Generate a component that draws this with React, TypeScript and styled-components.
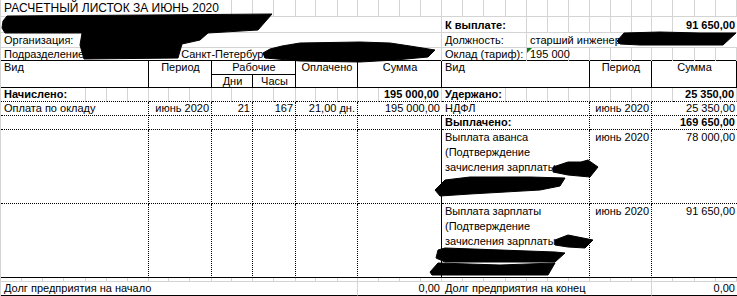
import React from "react";
import styled, { createGlobalStyle, css } from "styled-components";

const W = [21,21,21,22,21,21,21,20,21,22,20,21,21,22,20,22,20,21,21,21,21,21,21,22,21,21,21,21,21,21,20,21,22,21,21];
const COLS = W.map((w) => `${w}px`).join(" ");

const GRID = "#d4d4d4";

const Global = createGlobalStyle`
  html, body { margin: 0; padding: 0; background: #fff; }
  body { font-family: "Liberation Sans", Arial, sans-serif; font-size: 11px; color: #000; }
`;

type Line = "grid" | "dot" | "solid" | "none";
const line = (l?: Line) =>
  l === "solid" ? "1px solid #000" : l === "dot" ? "1px dotted #000" : l === "grid" ? `1px solid ${GRID}` : "0";

const Sheet = styled.div`
  position: relative;
  width: 737px;
  height: 296px;
  overflow: hidden;
  box-sizing: border-box;
  border-left: 1px solid ${GRID};
  background: #fff;
`;

const Row = styled.div<{ $h: number }>`
  display: grid;
  grid-template-columns: ${COLS};
  height: ${(p) => p.$h}px;
`;

const HeaderGrid = styled.div`
  display: grid;
  grid-template-columns: ${COLS};
  grid-template-rows: 14px 12px;
  border-top: 1px solid #000;
  border-bottom: 1px solid #000;
`;

const Cell = styled.div<{
  $span?: number;
  $r?: Line;
  $b?: Line;
  $align?: "left" | "right" | "center";
  $top?: boolean;
  $bold?: boolean;
  $rows?: number;
  $lh?: number;
}>`
  grid-column: span ${(p) => p.$span ?? 1};
  ${(p) => p.$rows && css`grid-row: span ${p.$rows};`}
  box-sizing: border-box;
  position: relative;
  border-right: ${(p) => line(p.$r ?? "grid")};
  border-bottom: ${(p) => line(p.$b ?? "none")};
  padding: 0 2px 0 3px;
  display: flex;
  align-items: ${(p) => (p.$top ? "flex-start" : "flex-end")};
  justify-content: ${(p) => (p.$align === "right" ? "flex-end" : p.$align === "center" ? "center" : "flex-start")};
  text-align: ${(p) => p.$align ?? "left"};
  white-space: nowrap;
  line-height: ${(p) => p.$lh ?? 13}px;
  font-weight: ${(p) => (p.$bold ? 700 : 400)};
  min-width: 0;
`;

const Title = styled(Cell)`
  font-size: 12px;
  line-height: 15px;
`;

const Multi = styled.div`
  white-space: nowrap;
  line-height: 15px;
`;

const Flag = styled(Cell)`
  &::before {
    content: "";
    position: absolute;
    left: 0;
    top: 0;
    border-top: 5px solid #0b7d16;
    border-right: 5px solid transparent;
  }
`;

const Gap = styled.span<{ $w: number }>`
  display: inline-block;
  width: ${(p) => p.$w}px;
`;

const Redactions = styled.svg`
  position: absolute;
  left: -1px;
  top: 0;
  pointer-events: none;
`;

const fill = (n: number, b: Line = "grid", r: Line = "grid") =>
  Array.from({ length: n }, (_, i) => <Cell key={`f${i}`} $b={b} $r={r} />);

const blots = [
  "3,21 7,16 150,15 272,14 258,30 208,33 200,40 182,44 178,58 84,59 80,45 82,33 5,33 2,28",
  "263,53 270,49 282,46 300,43 360,42 390,43 410,46 435,50 428,57 395,60 360,62 300,61 265,58",
  "617,41 624,33 660,32 700,33 736,33 723,45 640,45 620,44",
  "553,167 568,162 581,162 588,160 598,167 590,177 568,175 553,172",
  "435,190 445,180 470,177 530,177 565,178 560,186 540,190 470,194 440,196",
  "555,240 568,235 593,240 585,248 568,247 555,245",
  "438,250 445,248 555,252 565,253 555,262 445,262 436,258",
  "430,272 438,263 500,265 555,263 548,275 432,275",
];

export default function App() {
  return (
    <>
      <Global />
      <Sheet>
        {/* row 1 */}
        <Row $h={17}>
          <Title $span={11} $b="grid">РАСЧЕТНЫЙ ЛИСТОК ЗА ИЮНЬ 2020</Title>
          {fill(24)}
        </Row>
        {/* row 2 */}
        <Row $h={16}>
          <Cell $span={21} $b="grid" />
          <Cell $span={4} $b="grid" $bold>К выплате:</Cell>
          {fill(7)}
          <Cell $span={3} $b="grid" $r="none" $align="right" $bold>91 650,00</Cell>
        </Row>
        {/* row 3 */}
        <Row $h={15}>
          <Cell $span={21} $b="grid">Организация:</Cell>
          <Cell $span={4} $b="grid">Должность:</Cell>
          <Cell $span={10} $b="grid" $r="none">старший инженер</Cell>
        </Row>
        {/* row 4 */}
        <Row $h={12}>
          <Cell $span={21}>
            Подразделение<Gap $w={97} />Санкт-Петербург
          </Cell>
          <Cell $span={4}>Оклад (тариф):</Cell>
          <Flag $span={2}>195 000</Flag>
          {fill(8, "none")}
        </Row>
        {/* header */}
        <HeaderGrid>
          <Cell $span={7} $rows={2} $r="solid" $top>Вид</Cell>
          <Cell $span={3} $rows={2} $r="solid" $top $align="center">Период</Cell>
          <Cell $span={4} $r="solid" $b="solid" $top $align="center">Рабочие</Cell>
          <Cell $span={3} $rows={2} $r="solid" $top $align="center">Оплачено</Cell>
          <Cell $span={4} $rows={2} $r="solid" $top $align="center">Сумма</Cell>
          <Cell $span={7} $rows={2} $r="solid" $top>Вид</Cell>
          <Cell $span={3} $rows={2} $r="solid" $top $align="center">Период</Cell>
          <Cell $span={4} $rows={2} $r="solid" $top $align="center">Сумма</Cell>
          <Cell $span={2} $r="solid" $top $align="center" $lh={12}>Дни</Cell>
          <Cell $span={2} $r="solid" $top $align="center" $lh={12}>Часы</Cell>
        </HeaderGrid>
        {/* Начислено / Удержано */}
        <Row $h={14}>
          <Cell $span={4} $b="dot" $bold>Начислено:</Cell>
          {fill(14, "dot")}
          <Cell $span={3} $b="dot" $align="right" $bold>195 000,00</Cell>
          <Cell $span={3} $b="dot" $bold>Удержано:</Cell>
          {fill(8, "dot")}
          <Cell $span={3} $b="dot" $align="right" $bold>25 350,00</Cell>
        </Row>
        {/* Оплата / НДФЛ */}
        <Row $h={13}>
          <Cell $span={7} $b="dot" $r="dot">Оплата по окладу</Cell>
          <Cell $span={3} $b="dot" $r="dot" $align="right">июнь 2020</Cell>
          <Cell $span={2} $b="dot" $r="dot" $align="right">21</Cell>
          <Cell $span={2} $b="dot" $r="dot" $align="right">167</Cell>
          <Cell $span={3} $b="dot" $r="dot" $align="right">21,00 дн.</Cell>
          <Cell $span={4} $b="dot" $r="none" $align="right">195 000,00</Cell>
          <Cell $span={7} $b="dot" $r="dot">НДФЛ</Cell>
          <Cell $span={3} $b="dot" $r="dot" $align="right">июнь 2020</Cell>
          <Cell $span={4} $b="dot" $r="none" $align="right">25 350,00</Cell>
        </Row>
        {/* empty / Выплачено */}
        <Row $h={15}>
          <Cell $span={7} $b="dot" $r="dot" />
          <Cell $span={3} $b="dot" $r="dot" />
          <Cell $span={2} $b="dot" $r="dot" />
          <Cell $span={2} $b="dot" $r="dot" />
          <Cell $span={3} $b="dot" $r="dot" />
          <Cell $span={4} $b="dot" $r="solid" />
          <Cell $span={7} $b="dot" $r="dot" $bold>Выплачено:</Cell>
          <Cell $span={3} $b="dot" $r="dot" />
          <Cell $span={4} $b="dot" $r="none" $align="right" $bold>169 650,00</Cell>
        </Row>
        {/* аванс */}
        <Row $h={74}>
          <Cell $span={7} $b="dot" $r="dot" />
          <Cell $span={3} $b="dot" $r="dot" />
          <Cell $span={2} $b="dot" $r="dot" />
          <Cell $span={2} $b="dot" $r="dot" />
          <Cell $span={3} $b="dot" $r="dot" />
          <Cell $span={4} $b="dot" $r="solid" />
          <Cell $span={7} $b="dot" $r="dot" $top>
            <Multi>
              Выплата аванса
              <br />
              (Подтверждение
              <br />
              зачисления зарплаты
            </Multi>
          </Cell>
          <Cell $span={3} $b="dot" $r="dot" $top $align="right" $lh={15}>июнь 2020</Cell>
          <Cell $span={4} $b="dot" $r="none" $top $align="right" $lh={15}>78 000,00</Cell>
        </Row>
        {/* зарплата */}
        <Row $h={74}>
          <Cell $span={7} $b="solid" $r="dot" />
          <Cell $span={3} $b="solid" $r="dot" />
          <Cell $span={2} $b="solid" $r="dot" />
          <Cell $span={2} $b="solid" $r="dot" />
          <Cell $span={3} $b="solid" $r="dot" />
          <Cell $span={4} $b="solid" $r="solid" />
          <Cell $span={7} $b="solid" $r="dot" $top>
            <Multi>
              Выплата зарплаты
              <br />
              (Подтверждение
              <br />
              зачисления зарплаты
            </Multi>
          </Cell>
          <Cell $span={3} $b="solid" $r="dot" $top $align="right" $lh={15}>июнь 2020</Cell>
          <Cell $span={4} $b="solid" $r="none" $top $align="right" $lh={15}>91 650,00</Cell>
        </Row>
        <Row $h={4}>{fill(35)}</Row>
        <Row $h={14}>
          <Cell $span={17} $b="solid">Долг предприятия на начало</Cell>
          <Cell $span={4} $b="solid" $r="none" $align="right">0,00</Cell>
          <Cell $span={10} $b="solid">Долг предприятия на конец</Cell>
          <Cell $span={4} $b="solid" $r="none" $align="right">0,00</Cell>
        </Row>
        <Redactions width={737} height={296} viewBox="0 0 737 296">
          {blots.map((pts, i) => (
            <polygon key={i} points={pts} fill="#000" strokeLinejoin="round" stroke="#000" strokeWidth={1} />
          ))}
        </Redactions>
      </Sheet>
    </>
  );
}
